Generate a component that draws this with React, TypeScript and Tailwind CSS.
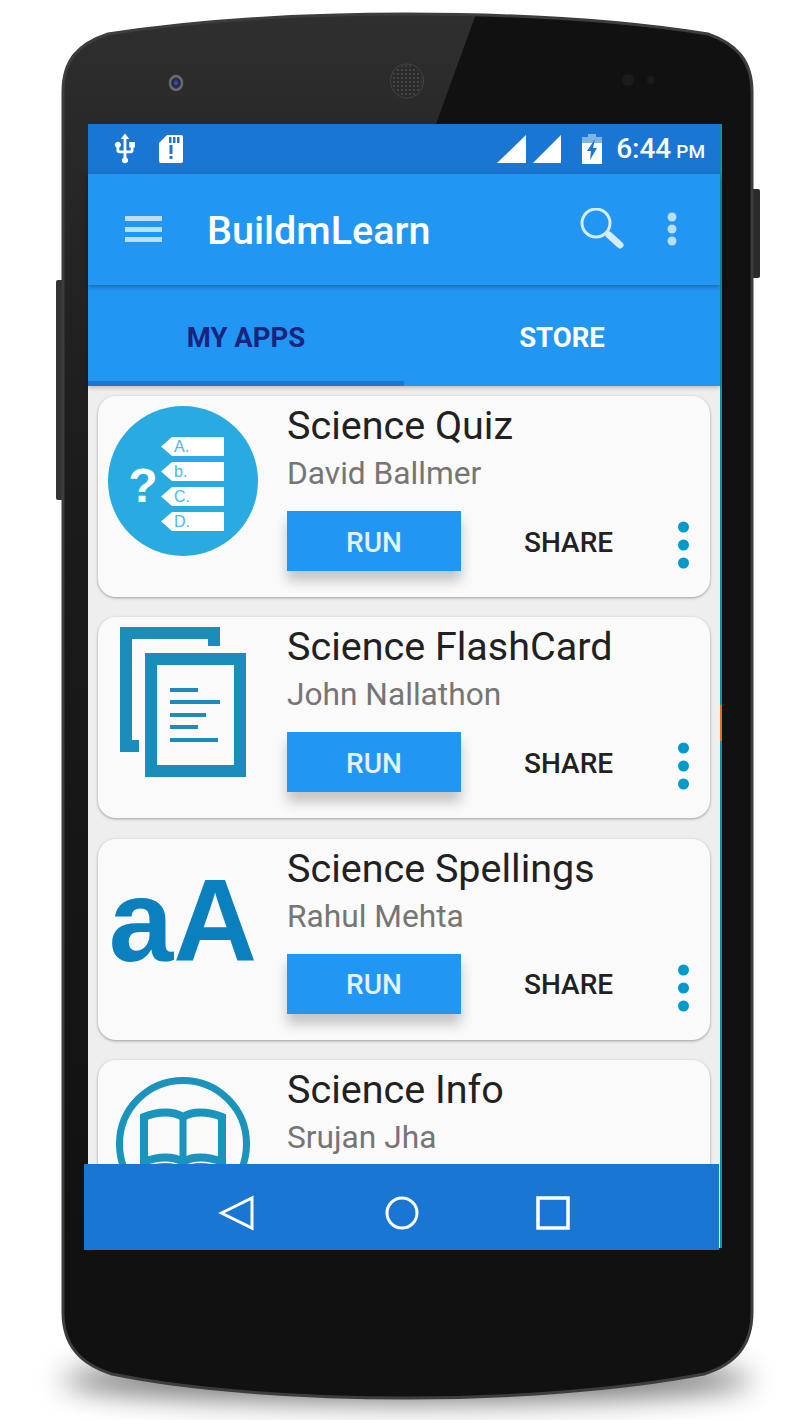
const apps = [
  { title: 'Science Quiz', author: 'David Ballmer', icon: 'quiz' },
  { title: 'Science FlashCard', author: 'John Nallathon', icon: 'flash' },
  { title: 'Science Spellings', author: 'Rahul Mehta', icon: 'spell' },
  { title: 'Science Info', author: 'Srujan Jha', icon: 'info' },
];

const BODY =
  'M63 92C63 60 78 44 108 34C200 20 300 14 407 14C520 14 620 20 708 34C736 44 752 60 752 92L752 1312C752 1345 736 1364 704 1374C620 1390 510 1398 407 1398C300 1398 190 1390 112 1374C80 1364 63 1345 63 1312Z';

function DeviceArt() {
  return (
    <svg className="absolute inset-0" width="802" height="1420" viewBox="0 0 802 1420">
      <defs>
        <filter id="soft" x="-20%" y="-300%" width="140%" height="700%">
          <feGaussianBlur stdDeviation="14" />
        </filter>
        <linearGradient id="gloss" x1="0" y1="0" x2="0" y2="1">
          <stop offset="0" stopColor="#303030" />
          <stop offset="0.1" stopColor="#292929" />
          <stop offset="0.4" stopColor="#1b1b1b" />
          <stop offset="1" stopColor="#111111" />
        </linearGradient>
        <clipPath id="bodyClip">
          <path d={BODY} />
        </clipPath>
        <radialGradient id="lens">
          <stop offset="0" stopColor="#4a50c0" />
          <stop offset="0.5" stopColor="#20223f" />
          <stop offset="0.8" stopColor="#777777" />
          <stop offset="1" stopColor="#4a4a4a" />
        </radialGradient>
        <pattern id="mesh" width="4" height="4" patternUnits="userSpaceOnUse">
          <circle cx="2" cy="2" r="1.1" fill="#4c4c4c" />
        </pattern>
      </defs>
      <ellipse cx="407" cy="1380" rx="345" ry="22" fill="#000000" fillOpacity="0.55" filter="url(#soft)" />
      <rect x="56" y="280" width="10" height="220" rx="2" fill="#333333" />
      <rect x="749" y="189" width="11" height="89" rx="2" fill="#2b2b2b" />
      <path d={BODY} fill="#111111" />
      <g clipPath="url(#bodyClip)">
        <polygon points="481,0 436,124 88,124 88,1250 40,1250 40,0" fill="url(#gloss)" />
      </g>
      <path d={BODY} fill="none" stroke="#3d3d3d" strokeWidth="3" />
      <ellipse cx="176" cy="83" rx="7.5" ry="8.5" fill="url(#lens)" />
      <ellipse cx="407" cy="81" rx="16.5" ry="17" fill="#2a2a2a" stroke="#444444" />
      <ellipse cx="407" cy="81" rx="15" ry="15.5" fill="url(#mesh)" />
      <circle cx="628" cy="80" r="6" fill="#1b1b1b" />
      <circle cx="651" cy="80" r="4" fill="#1b1b1b" />
    </svg>
  );
}

function StatusBar() {
  return (
    <div className="flex h-[50px] items-center bg-[#1976d2] pl-[20px] pr-[15px] text-white">
      <svg width="34" height="34" viewBox="0 0 24 24" fill="#ffffff">
        <path d="M15 7v4h1v2h-3V5h2l-3-4-3 4h2v8H8v-2.07c.7-.37 1.2-1.08 1.2-1.93 0-1.21-.99-2.2-2.2-2.2-1.21 0-2.2.99-2.2 2.2 0 .85.5 1.56 1.2 1.93V13c0 1.11.89 2 2 2h3v3.05c-.71.37-1.2 1.1-1.2 1.95 0 1.22.99 2.2 2.2 2.2 1.21 0 2.2-.98 2.2-2.2 0-.85-.49-1.58-1.2-1.95V15h3c1.11 0 2-.89 2-2v-2h1V7h-4z" />
      </svg>
      <svg className="ml-[16px]" width="26" height="30" viewBox="0 0 26 30">
        <path d="M9 1H23a2 2 0 0 1 2 2V27a2 2 0 0 1-2 2H3a2 2 0 0 1-2-2V9Z" fill="#ffffff" />
        <rect x="11" y="3" width="2.5" height="6" fill="#1976d2" />
        <rect x="15" y="3" width="2.5" height="6" fill="#1976d2" />
        <rect x="19" y="3" width="2.5" height="6" fill="#1976d2" />
        <rect x="11.5" y="11" width="3" height="9" fill="#1976d2" />
        <rect x="11.5" y="22" width="3" height="3" fill="#1976d2" />
      </svg>
      <div className="flex-1" />
      <svg width="64" height="28" viewBox="0 0 64 28" fill="#ffffff">
        <polygon points="0,28 29,0 29,28" />
        <polygon points="36,28 64,0 64,28" />
      </svg>
      <svg className="ml-[21px]" width="20" height="30" viewBox="0 0 20 30">
        <path d="M6 0h8v3h6v6H0V3h6Z" fill="#ffffff" fillOpacity="0.45" />
        <path d="M0 9h20v21H0Z" fill="#ffffff" />
        <path d="M13 5 5 17h4l-1 9 7-12h-4Z" fill="#1976d2" />
      </svg>
      <span className="ml-[14px] text-[28px] font-medium leading-none">6:44</span>
      <span className="ml-[5px] mt-[5px] text-[19px] font-medium leading-none">PM</span>
    </div>
  );
}

function Toolbar() {
  return (
    <div className="relative z-20 flex h-[111px] items-start bg-[#2196f3] shadow-[0_2px_5px_rgba(0,0,0,0.3)]">
      <div className="ml-[37px] mt-[42px] flex w-[37px] flex-col gap-[5.5px]">
        <div className="h-[5px] bg-[#bbdefb]" />
        <div className="h-[5px] bg-[#bbdefb]" />
        <div className="h-[5px] bg-[#bbdefb]" />
      </div>
      <div className="ml-[45px] mt-[33px] text-[39.5px] font-medium leading-[48px] text-white">BuildmLearn</div>
      <div className="flex-1" />
      <svg className="mt-[34px]" width="46" height="44" viewBox="0 0 46 44">
        <circle cx="16" cy="15" r="14" fill="none" stroke="#d6ebfd" strokeWidth="3" />
        <path d="M29 27 40 37" stroke="#d6ebfd" strokeWidth="7" strokeLinecap="round" />
      </svg>
      <svg className="ml-[41px] mr-[43px] mt-[38px]" width="10" height="34" viewBox="0 0 10 34" fill="#bbdefb">
        <circle cx="5" cy="5" r="4.5" />
        <circle cx="5" cy="17" r="4.5" />
        <circle cx="5" cy="29" r="4.5" />
      </svg>
    </div>
  );
}

function Tabs() {
  return (
    <div className="relative z-10 h-[101px] bg-[#2196f3] shadow-[0_2px_4px_rgba(0,0,0,0.2)]">
      <div className="grid h-[96px] grid-cols-2 pt-[9px] text-[27.5px] font-bold">
        <div className="flex items-center justify-center text-[#1a237e]">MY APPS</div>
        <div className="flex items-center justify-center text-white">STORE</div>
      </div>
      <div className="h-[5px] w-[316px] bg-[#1976d2]" />
    </div>
  );
}

function AppIcon({ name }: { name: string }) {
  if (name === 'quiz') {
    return (
      <svg width="150" height="150" viewBox="0 0 150 150">
        <circle cx="75" cy="75" r="75" fill="#29abe2" />
        <text x="35" y="96" fontFamily="Liberation Sans, sans-serif" fontWeight="700" fontSize="48" textAnchor="middle" fill="#ffffff">?</text>
        {['A.', 'b.', 'C.', 'D.'].map((letter, i) => {
          const y = [31, 56, 81, 106][i];
          return (
            <g key={letter}>
              <polygon points={`53,${y + 9.5} 64,${y} 116,${y} 116,${y + 19} 64,${y + 19}`} fill="#ffffff" />
              <text x="66" y={y + 15} fontFamily="Liberation Sans, sans-serif" fontSize="16" fill="#4fb9e6">{letter}</text>
            </g>
          );
        })}
      </svg>
    );
  }
  if (name === 'flash') {
    return (
      <svg width="150" height="150" viewBox="0 0 150 150" fill="none" stroke="#1a8dbb">
        <path d="M106 19V6H18V119H31" strokeWidth="12" />
        <rect x="43" y="32" width="89" height="112" strokeWidth="12" fill="#fafafa" />
        <g strokeWidth="4">
          <path d="M62 63H90" />
          <path d="M62 75H112" />
          <path d="M62 88H98" />
          <path d="M62 100H90" />
          <path d="M62 113H110" />
        </g>
      </svg>
    );
  }
  if (name === 'spell') {
    return (
      <div className="flex h-[150px] w-[150px] items-center justify-center pb-[6px] text-[116px] font-bold leading-none text-[#0a80bf] [font-family:'Liberation_Sans',sans-serif]">
        aA
      </div>
    );
  }
  return (
    <svg width="150" height="150" viewBox="0 0 150 150" fill="none" stroke="#1a93bd">
      <circle cx="75" cy="74" r="63.5" strokeWidth="7" />
      <path d="M36 47C50 41 66 41 75 47C84 41 100 41 114 47V92C100 86 84 86 75 92C66 86 50 86 36 92Z" strokeWidth="8" />
      <path d="M75 47V92" strokeWidth="7" />
      <path d="M36 100C50 94 66 94 75 100C84 94 100 94 114 100" strokeWidth="5" />
    </svg>
  );
}

function AppCard({ title, author, icon }: { title: string; author: string; icon: string }) {
  return (
    <div className="mb-[20.3px] flex h-[201px] shrink-0 rounded-[18px] bg-[#fafafa] shadow-[0_1px_3px_rgba(0,0,0,0.35)]">
      <div className="ml-[10px] mt-[10px] h-[150px] w-[150px] shrink-0">
        <AppIcon name={icon} />
      </div>
      <div className="ml-[29px] flex-1 pt-[8px]">
        <div className="whitespace-nowrap text-[39.5px] leading-[44px] text-[#212121]">{title}</div>
        <div className="mt-[8px] whitespace-nowrap text-[31.7px] leading-[36px] text-[#757575]">{author}</div>
        <div className="mt-[19px] flex items-center">
          <button className="h-[60px] w-[174px] bg-[#2196f3] pt-[3px] text-[28px] font-medium text-[#e3f2fd] shadow-[0_10px_12px_rgba(0,0,0,0.22)]">
            RUN
          </button>
          <span className="ml-[63px] pt-[3px] text-[28px] font-medium text-[#212121]">SHARE</span>
          <svg className="ml-[65px] mt-[8px]" width="11" height="48" viewBox="0 0 11 48" fill="#0099cc">
            <circle cx="5.5" cy="6" r="5.5" />
            <circle cx="5.5" cy="24" r="5.5" />
            <circle cx="5.5" cy="42" r="5.5" />
          </svg>
        </div>
      </div>
    </div>
  );
}

function NavBar() {
  return (
    <div className="relative z-20 -ml-[4px] flex h-[86px] w-[635px] items-center bg-[#1976d2] pt-[12px]">
      <svg className="ml-[134px]" width="36" height="36" viewBox="0 0 36 36" fill="none" stroke="#ffffff" strokeWidth="3">
        <polygon points="3.5,18 34,3 34,33" />
      </svg>
      <svg className="ml-[131px]" width="34" height="34" viewBox="0 0 34 34" fill="none" stroke="#ffffff" strokeWidth="3">
        <circle cx="17" cy="17" r="15" />
      </svg>
      <svg className="ml-[117px]" width="34" height="34" viewBox="0 0 34 34" fill="none" stroke="#ffffff" strokeWidth="3.5">
        <rect x="2" y="2" width="30" height="30" />
      </svg>
    </div>
  );
}

export default function App() {
  return (
    <div className="relative h-[1420px] w-[802px] overflow-hidden bg-white [font-family:Roboto,sans-serif]">
      <DeviceArt />
      <div className="relative ml-[88px] w-[634px] pt-[124px]">
        <div className="relative flex h-[1124px] flex-col border-r-2 border-[#00989c]">
          <div className="absolute -right-[2px] top-[581px] h-[36px] w-[2px] bg-[#e0701c]" />
          <StatusBar />
          <Toolbar />
          <Tabs />
          <div className="flex min-h-0 flex-1 flex-col overflow-hidden bg-[#eeeeee] px-[10px] pt-[10px]">
            {apps.map((app) => (
              <AppCard key={app.title} title={app.title} author={app.author} icon={app.icon} />
            ))}
          </div>
        </div>
        <div className="-mt-[84px]">
          <NavBar />
        </div>
      </div>
    </div>
  );
}
